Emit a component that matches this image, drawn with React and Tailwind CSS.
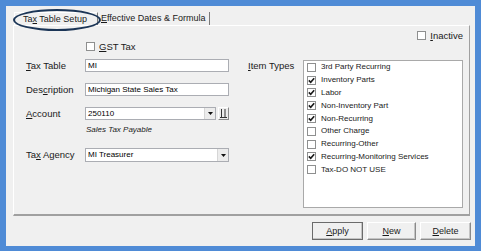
import React from "react";

const items = [
  { label: "3rd Party Recurring", checked: false },
  { label: "Inventory Parts", checked: true },
  { label: "Labor", checked: true },
  { label: "Non-Inventory Part", checked: true },
  { label: "Non-Recurring", checked: true },
  { label: "Other Charge", checked: false },
  { label: "Recurring-Other", checked: false },
  { label: "Recurring-Monitoring Services", checked: true },
  { label: "Tax-DO NOT USE", checked: false },
];

function Box({ checked }) {
  return (
    <span className="w-[9px] h-[9px] border border-[#8e8f8f] bg-white flex items-center justify-center shrink-0">
      {checked && (
        <svg width="7" height="7" viewBox="0 0 7 7">
          <path d="M0.8 3.4 L2.7 5.3 L6.2 1.2" stroke="#1a1a1a" strokeWidth="1.6" fill="none" />
        </svg>
      )}
    </span>
  );
}

function Arrow() {
  return (
    <span className="w-[11px] h-full bg-[#ececec] border-l border-[#d6d6d6] flex items-center justify-center shrink-0">
      <svg width="5" height="3" viewBox="0 0 5 3">
        <path d="M0 0 H5 L2.5 3 Z" fill="#111" />
      </svg>
    </span>
  );
}

function Field({ children, width = "w-[144px]", combo }) {
  return (
    <div className={`${width} h-full bg-white border border-[#abadb3] flex items-center`}>
      <span className="flex-1 pl-[2px] text-[8px] leading-none text-black">{children}</span>
      {combo && <Arrow />}
    </div>
  );
}

function Label({ children }) {
  return <span className="w-[59px] text-[9.5px] leading-none text-[#1a1a1a]">{children}</span>;
}

function Button({ children, w, main }) {
  return (
    <button
      className={`${w} h-[18px] bg-[#f0f0f0] text-[9px] leading-none text-[#1a1a1a] flex items-center justify-center border ${
        main ? "border-[#6b6b6b]" : "border-t-white border-l-white border-b-[#8a8a8a] border-r-[#8a8a8a]"
      } shadow-[inset_-1px_-1px_0_#c4c4c4]`}
    >
      {children}
    </button>
  );
}

export default function App() {
  return (
    <div className="w-[481px] h-[251px] bg-[#4f8bd6] pt-[6px] pl-[6px] font-['Liberation_Sans',Arial,sans-serif]">
      <div className="relative w-[469px] h-[240px] bg-[#f0f0f0] flex flex-col">
        <div className="h-[19px] pl-[8px] flex items-end">
          <div className="w-[84px] h-[13px] border-l border-t border-white border-r border-r-[#7a7a7a] pl-[8px] flex items-center text-[9px] leading-none text-[#1a1a1a]">
            <span>
              Ta<u>x</u> Table Setup
            </span>
          </div>
          <div className="w-[112px] h-[13px] border-r border-[#7a7a7a] pl-[3px] flex items-center text-[9px] leading-none text-[#1a1a1a]">
            <span>
              <u>E</u>ffective Dates &amp; Formula
            </span>
          </div>
        </div>

        <div className="ml-[7px] w-[457px] h-[191px] border-t border-l border-white border-r border-r-[#a0a0a0] border-b-2 border-b-[#a0a0a0] flex flex-col">
          <div className="mt-[5px] h-[9px] flex justify-end items-center pr-[6px] gap-[4px]">
            <Box />
            <span className="text-[9.5px] leading-none text-[#1a1a1a]">
              <u>I</u>nactive
            </span>
          </div>

          <div className="flex items-start">
            <div className="w-[234px] pl-[12px] mt-[2px] flex flex-col">
              <div className="h-[9px] pl-[60px] flex items-center gap-[4px]">
                <Box />
                <span className="text-[9.5px] leading-none text-[#1a1a1a]">
                  <u>G</u>ST Tax
                </span>
              </div>
              <div className="mt-[8px] h-[13px] flex items-center">
                <Label>
                  <u>T</u>ax Table
                </Label>
                <Field>MI</Field>
              </div>
              <div className="mt-[11px] h-[13px] flex items-center">
                <Label>
                  Des<u>c</u>ription
                </Label>
                <Field>Michigan State Sales Tax</Field>
              </div>
              <div className="mt-[11px] h-[13px] flex items-center">
                <Label>
                  <u>A</u>ccount
                </Label>
                <Field width="w-[131px]" combo>
                  250110
                </Field>
                <span className="ml-[2px] w-[11px] h-full bg-[#ececec] border border-t-white border-l-white border-b-[#8a8a8a] border-r-[#8a8a8a] flex items-center justify-center">
                  <svg width="7" height="9" viewBox="0 0 7 9">
                    <path d="M1.5 0 V8 M5 0 V8 M0 8.5 H7" stroke="#333" strokeWidth="1" fill="none" />
                  </svg>
                </span>
              </div>
              <div className="mt-[5px] h-[10px] pl-[60px] flex items-center text-[8px] italic leading-none text-[#1a1a1a]">
                Sales Tax Payable
              </div>
              <div className="mt-[13px] h-[14px] flex items-center">
                <Label>
                  Ta<u>x</u> Agency
                </Label>
                <Field combo>MI Treasurer</Field>
              </div>
            </div>

            <div className="mt-[20px] flex items-start">
              <span className="w-[55px] text-[9.5px] leading-[11px] text-[#1a1a1a]">
                <u>I</u>tem Types
              </span>
              <div className="w-[160px] h-[148px] bg-white border border-[#a9a9a9] pl-[3px] flex flex-col">
                {items.map((it) => (
                  <div key={it.label} className="h-[12.8px] flex items-center gap-[5px] shrink-0">
                    <Box checked={it.checked} />
                    <span className="text-[8px] leading-none text-[#1a1a1a] whitespace-nowrap">{it.label}</span>
                  </div>
                ))}
              </div>
            </div>
          </div>
        </div>

        <div className="mt-[6px] flex justify-end pr-[4px] gap-[4px]">
          <Button w="w-[51px]" main>
            <span>
              <u>A</u>pply
            </span>
          </Button>
          <Button w="w-[49px]">
            <span>
              <u>N</u>ew
            </span>
          </Button>
          <Button w="w-[51px]">
            <span>
              <u>D</u>elete
            </span>
          </Button>
        </div>

        <div className="absolute left-[7px] top-[3px] w-[88px] h-[22px] border-2 border-[#1b3556] rounded-[50%]" />
      </div>
    </div>
  );
}
